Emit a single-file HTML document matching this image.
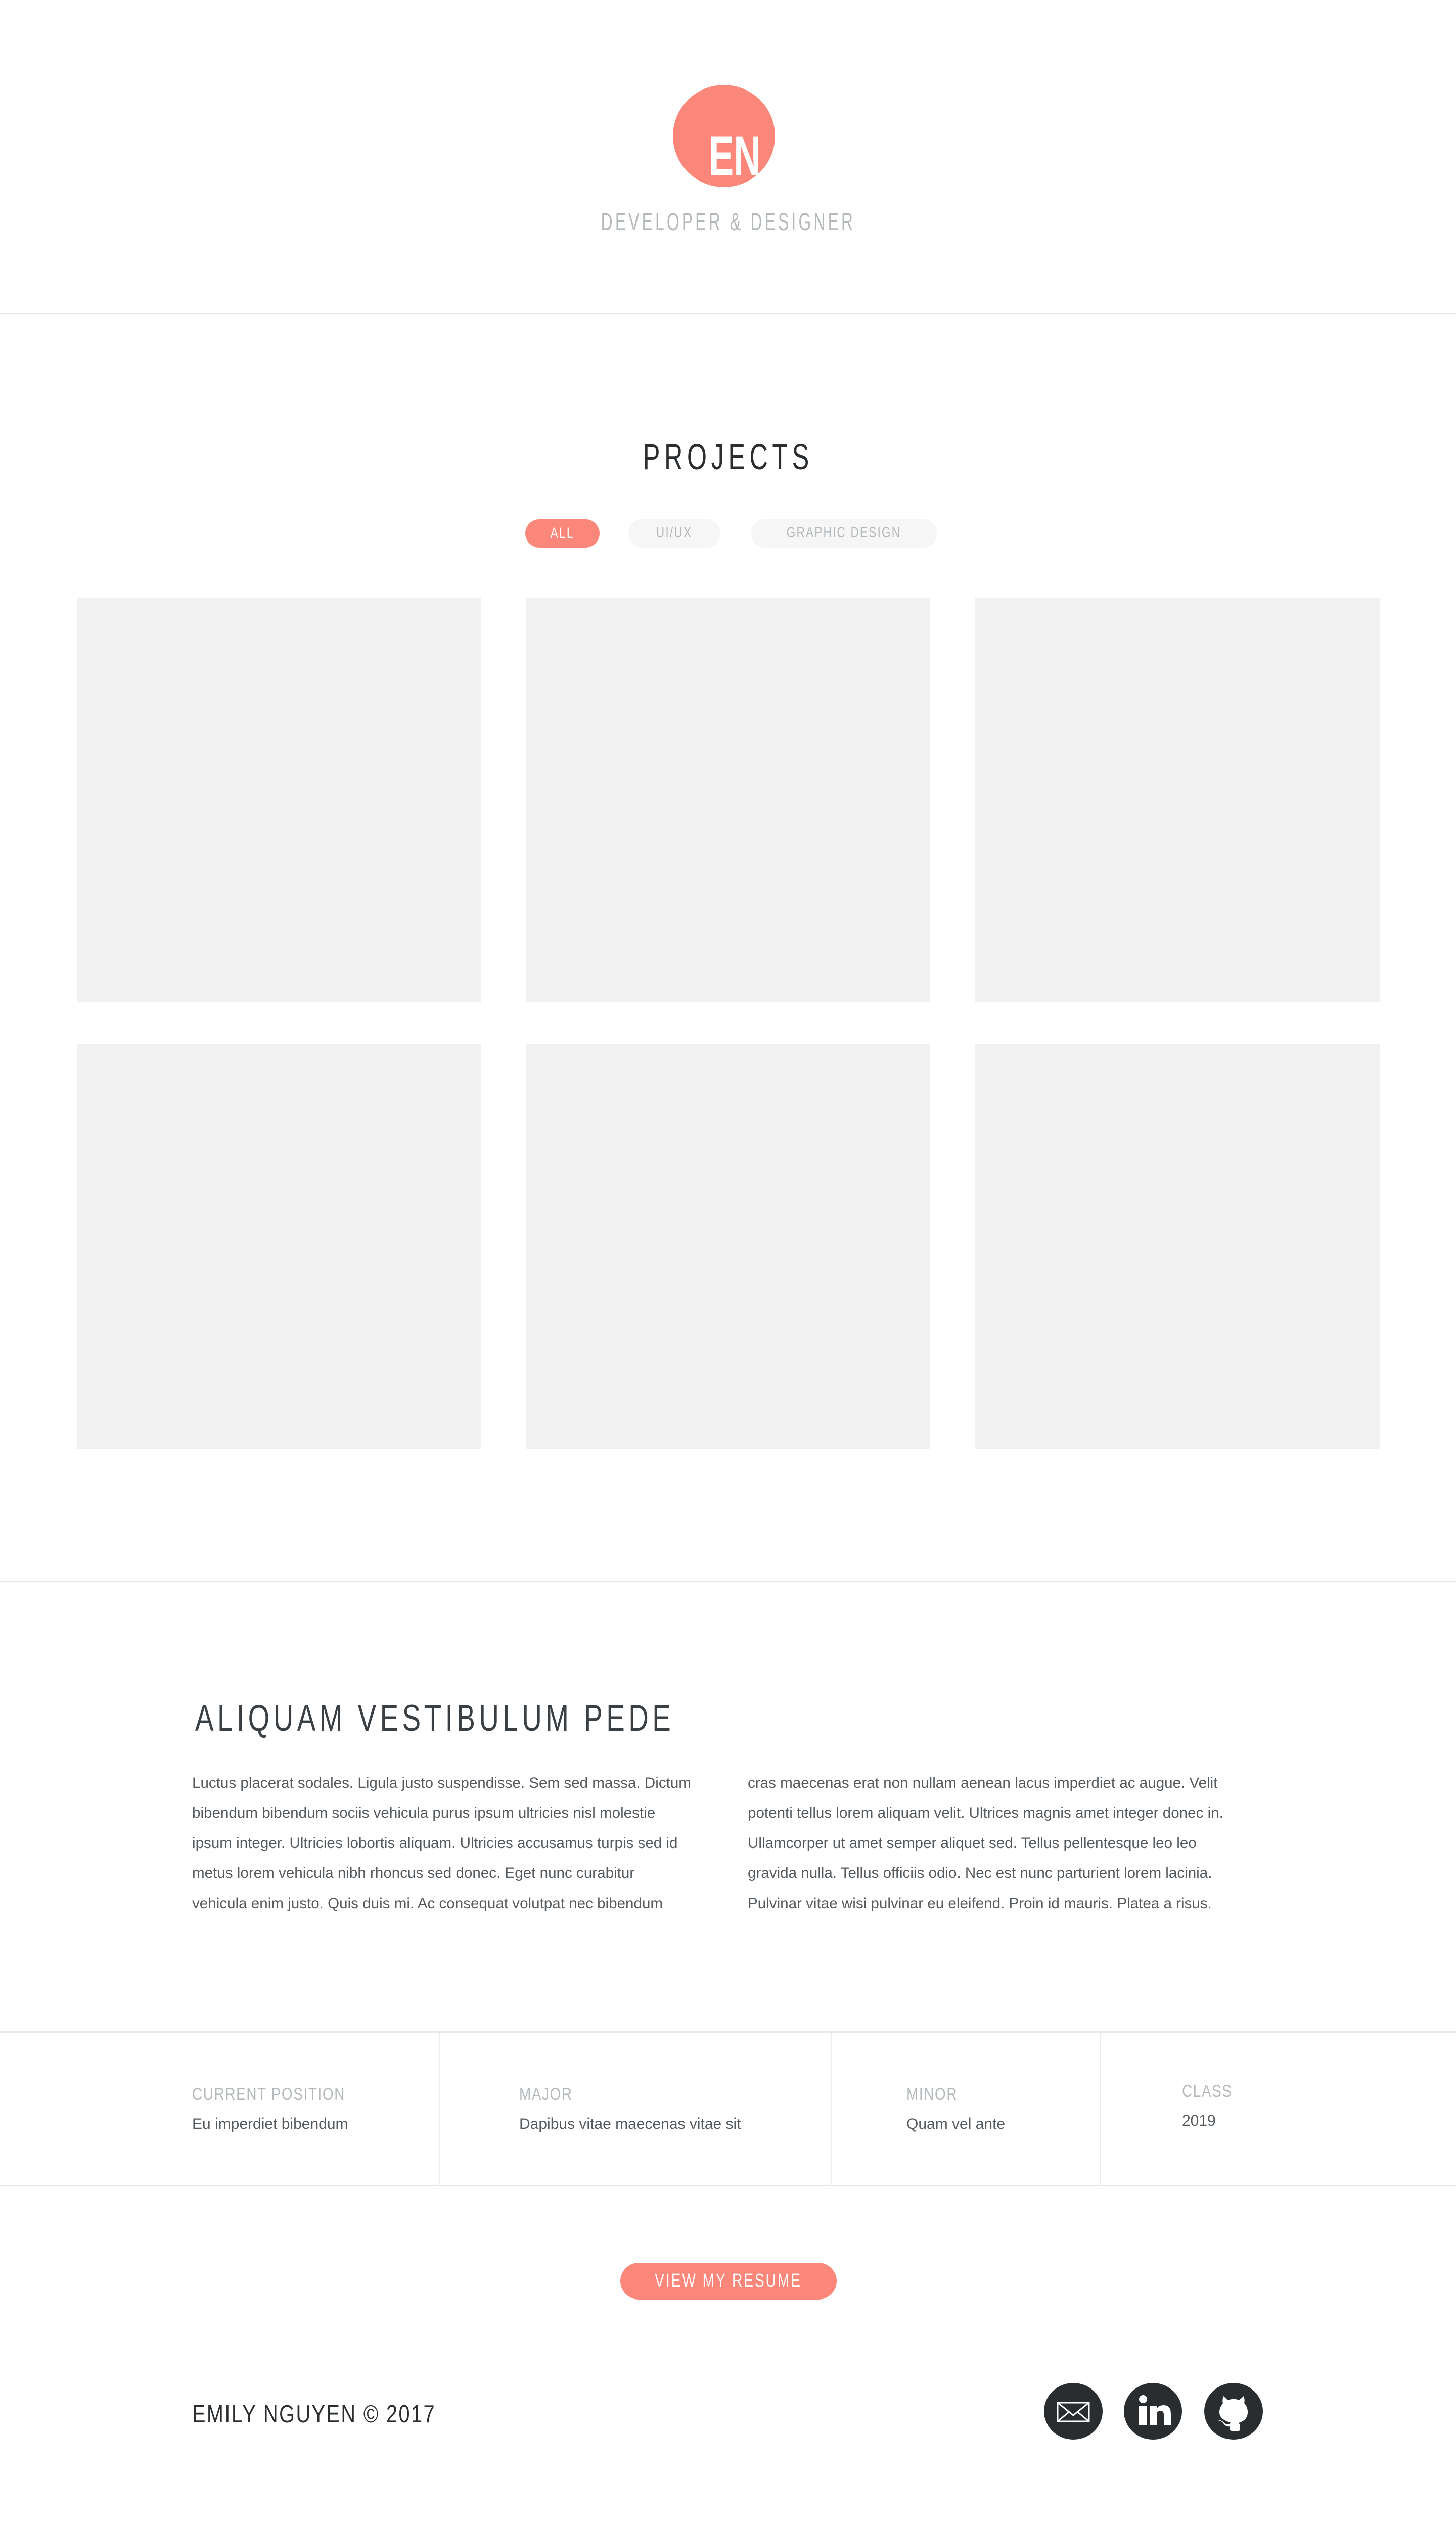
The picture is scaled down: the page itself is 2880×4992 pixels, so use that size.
<!DOCTYPE html>
<html><head><meta charset="utf-8"><style>
*{margin:0;padding:0;box-sizing:border-box}
html,body{width:2880px;height:4992px;background:#fff;overflow:hidden;font-family:"Liberation Sans",sans-serif;position:relative}
.a{position:absolute;white-space:nowrap;line-height:1}
.s{display:inline-block}
.box{position:absolute;background:#f1f1f1;width:800px;height:800px}
.pill{position:absolute;height:56px;border-radius:28px;background:#f6f6f6;color:#b3b8bb;font-size:30px;line-height:56px;text-align:center}
.lbl{color:#b3b8bb;font-size:34px;letter-spacing:2px}
.val{color:#555a5f;font-size:30px}
.body{position:absolute;font-size:29.6px;line-height:59.4px;color:#555a5f;white-space:nowrap}
.ic{position:absolute;top:4713px;width:116px;height:112px;border-radius:50%;background:#2a2d30}
.ic svg{position:absolute;left:0;top:0}
</style></head><body>

<div class="a" style="left:1331px;top:168px;width:202px;height:202px;border-radius:50%;background:#fa877a"></div>
<div class="a" style="left:1402px;top:253px;font-size:112px;color:#fff;font-weight:bold"><span class="s" style="transform:scaleX(.66);transform-origin:left">EN</span></div>
<div class="a" style="left:0;width:2880px;text-align:center;top:416px;font-size:48px;color:#b3b8bb;letter-spacing:8px"><span class="s" style="transform:scaleX(.66);transform-origin:center">DEVELOPER &amp; DESIGNER</span></div>
<div class="a" style="left:0;top:619px;width:2880px;height:2px;background:#e6e9ea"></div>

<div class="a" style="left:0;width:2880px;text-align:center;top:869px;font-size:71px;color:#2b2e31;letter-spacing:12px"><span class="s" style="transform:scaleX(.71);transform-origin:center">PROJECTS</span></div>

<div class="pill" style="left:1039px;top:1027px;width:147px;background:#fa877a;color:#fff"><span class="s" style="transform:scaleX(.75);letter-spacing:3px">ALL</span></div>
<div class="pill" style="left:1243px;top:1026px;width:182px;height:57px"><span class="s" style="transform:scaleX(.75);letter-spacing:3px">UI/UX</span></div>
<div class="pill" style="left:1486px;top:1026px;width:367px;height:57px"><span class="s" style="transform:scaleX(.75);letter-spacing:3px">GRAPHIC DESIGN</span></div>

<div class="box" style="left:152px;top:1182px"></div>
<div class="box" style="left:1040px;top:1182px"></div>
<div class="box" style="left:1929px;top:1182px;width:801px"></div>
<div class="box" style="left:152px;top:2065px;height:801px"></div>
<div class="box" style="left:1040px;top:2065px;height:801px"></div>
<div class="box" style="left:1929px;top:2065px;width:801px;height:801px"></div>

<div class="a" style="left:0;top:3127px;width:2880px;height:2px;background:#e6e6e6"></div>

<div class="a" style="left:386px;top:3362px;font-size:73px;color:#3a3f44;letter-spacing:10px"><span class="s" style="transform:scaleX(.75);transform-origin:left">ALIQUAM VESTIBULUM PEDE</span></div>

<div class="body" style="left:380px;top:3497px">Luctus placerat sodales. Ligula justo suspendisse. Sem sed massa. Dictum<br>bibendum bibendum sociis vehicula purus ipsum ultricies nisl molestie<br>ipsum integer. Ultricies lobortis aliquam. Ultricies accusamus turpis sed id<br>metus lorem vehicula nibh rhoncus sed donec. Eget nunc curabitur<br>vehicula enim justo. Quis duis mi. Ac consequat volutpat nec bibendum</div>
<div class="body" style="left:1479px;top:3497px">cras maecenas erat non nullam aenean lacus imperdiet ac augue. Velit<br>potenti tellus lorem aliquam velit. Ultrices magnis amet integer donec in.<br>Ullamcorper ut amet semper aliquet sed. Tellus pellentesque leo leo<br>gravida nulla. Tellus officiis odio. Nec est nunc parturient lorem lacinia.<br>Pulvinar vitae wisi pulvinar eu eleifend. Proin id mauris. Platea a risus.</div>

<div class="a" style="left:0;top:4017px;width:2880px;height:3px;background:#e6e8e9"></div>
<div class="a" style="left:0;top:4321px;width:2880px;height:3px;background:#e6e8e9"></div>
<div class="a" style="left:868px;top:4020px;width:2px;height:301px;background:#ececec"></div>
<div class="a" style="left:1643px;top:4020px;width:2px;height:301px;background:#ececec"></div>
<div class="a" style="left:2176px;top:4020px;width:2px;height:301px;background:#ececec"></div>

<div class="a lbl" style="left:380px;top:4125px"><span class="s" style="transform:scaleX(.82);transform-origin:left">CURRENT POSITION</span></div>
<div class="a val" style="left:380px;top:4186px">Eu imperdiet bibendum</div>
<div class="a lbl" style="left:1027px;top:4125px"><span class="s" style="transform:scaleX(.82);transform-origin:left">MAJOR</span></div>
<div class="a val" style="left:1027px;top:4186px">Dapibus vitae maecenas vitae sit</div>
<div class="a lbl" style="left:1793px;top:4125px"><span class="s" style="transform:scaleX(.82);transform-origin:left">MINOR</span></div>
<div class="a val" style="left:1793px;top:4186px">Quam vel ante</div>
<div class="a lbl" style="left:2338px;top:4119px"><span class="s" style="transform:scaleX(.82);transform-origin:left">CLASS</span></div>
<div class="a val" style="left:2338px;top:4180px">2019</div>

<div class="a" style="left:1227px;top:4475px;width:428px;height:73px;border-radius:37px;background:#fa877a;color:#fff;font-size:38px;line-height:73px;text-align:center;letter-spacing:4px"><span class="s" style="transform:scaleX(.74)">VIEW MY RESUME</span></div>

<div class="a" style="left:380px;top:4751px;font-size:49px;color:#2b2e31;letter-spacing:3px"><span class="s" style="transform:scaleX(.81);transform-origin:left">EMILY NGUYEN © 2017</span></div>

<div class="ic" style="left:2065px">
<svg width="116" height="112" viewBox="0 0 116 112"><g fill="none" stroke="#fff" stroke-width="3"><rect x="27" y="39" width="62" height="37" fill="none"/><path d="M27 39 L58 64 L89 39 M27 76 L50 57 M89 76 L66 57"/></g></svg></div>
<div class="ic" style="left:2223px;width:115px">
<svg width="115" height="112" viewBox="0 0 115 112"><circle cx="38" cy="32" r="8" fill="#fff"/><rect x="30" y="45" width="15" height="38" fill="#fff"/><path d="M51 45 H65 V51 C68 46 73 44 79 44 C89 44 93 51 93 61 V83 H79 V63 C79 58 77 55 72 55 C67 55 65 59 65 63 V83 H51 Z" fill="#fff"/></svg></div>
<div class="ic" style="left:2382px">
<svg width="116" height="112" viewBox="0 0 116 112"><path d="M38 26 L47 34 C54 31 62 31 69 34 L78 26 C80 31 80 37 79 40 C84 45 86 51 86 58 C86 70 78 76 68 79 C70 81 71 84 71 88 V92 C71 94 69 95 67 95 H55 C53 95 51 94 51 92 V86 C44 87 41 84 38 80 C36 77 33 75 27 74 C33 73 37 76 40 79 C43 82 47 83 51 81 C51 80 51 79 52 78 C42 76 30 70 30 58 C30 51 33 45 37 40 C36 37 36 31 38 26 Z" fill="#fff"/></svg></div>

</body></html>
